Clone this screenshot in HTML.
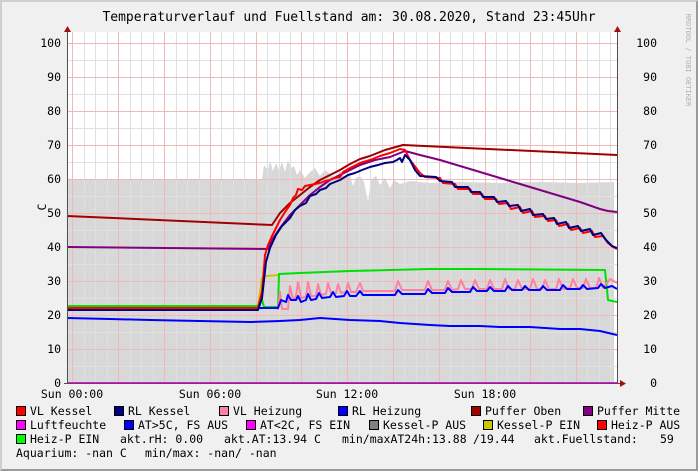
<!DOCTYPE html>
<html><head><meta charset="utf-8"><style>
html,body{margin:0;padding:0;}
body{width:698px;height:471px;overflow:hidden;background:#f0f0f0;position:relative;font-family:"DejaVu Sans Mono","Liberation Mono",monospace;}
.frame{position:absolute;left:0;top:0;width:694px;height:467px;border:2px solid #cfcfcf;border-right-color:#9a9a9a;border-bottom-color:#9a9a9a;}
.t{position:absolute;font-size:11.5px;color:#000;white-space:pre;line-height:12px;}
.b{position:absolute;width:8px;height:8px;border:1px solid #000;}
</style></head><body>
<div class="frame"></div>
<svg width="698" height="471" style="position:absolute;left:0;top:0" xmlns="http://www.w3.org/2000/svg" font-family="DejaVu Sans Mono, Liberation Mono, monospace">
<rect x="67" y="32" width="550" height="351" fill="#fff"/>
<!-- gray area -->
<path d="M67,383 L67,179 L262,179 L264,165 L268,170 L270,161 L273,171 L276,163 L279,170 L282,162 L285,172 L288,160 L291,168 L294,166 L297,175 L300,170 L305,178 L310,172 L315,168 L320,176 L325,170 L330,174 L335,178 L340,171 L345,178 L350,175 L353,186 L356,178 L360,176 L364,182 L368,202 L371,180 L376,176 L380,185 L385,178 L390,188 L394,180 L400,184 L410,181 L430,183 L460,182 L500,183 L540,182 L580,183 L614,182 L614,383 Z" fill="#d8d8d8"/>
<g stroke="#e0e0e0" stroke-width="1" fill="none">
<path d="M67,366.5H617M67,332.5H617M67,298.5H617M67,264.5H617M67,230.5H617M67,196.5H617M67,162.5H617M67,128.5H617M67,94.5H617M67,60.5H617"/>
<path d="M84.5,32V383M95.5,32V383M107.5,32V383M130.5,32V383M141.5,32V383M153.5,32V383M176.5,32V383M187.5,32V383M199.5,32V383M221.5,32V383M233.5,32V383M244.5,32V383M267.5,32V383M279.5,32V383M290.5,32V383M313.5,32V383M324.5,32V383M336.5,32V383M359.5,32V383M370.5,32V383M382.5,32V383M404.5,32V383M416.5,32V383M427.5,32V383M450.5,32V383M462.5,32V383M473.5,32V383M496.5,32V383M507.5,32V383M519.5,32V383M542.5,32V383M553.5,32V383M565.5,32V383M587.5,32V383M599.5,32V383M610.5,32V383"/>
</g>
<g stroke="#f2b8b8" stroke-width="1" fill="none">
<path d="M67,349.5H617M67,315.5H617M67,281.5H617M67,247.5H617M67,213.5H617M67,179.5H617M67,145.5H617M67,111.5H617M67,77.5H617M67,43.5H617"/>
<path d="M72.5,32V383M118.5,32V383M164.5,32V383M210.5,32V383M256.5,32V383M301.5,32V383M347.5,32V383M393.5,32V383M439.5,32V383M485.5,32V383M530.5,32V383M576.5,32V383"/>
</g>
<g fill="none" stroke-width="2" stroke-linejoin="round">
<path stroke="#0000ff" d="M67,318 L110,319 L150,320 L200,321 L250,322 L280,321 L300,320 L320,318 L350,320 L380,321 L400,323 L430,325 L450,326 L480,326 L500,327 L530,327 L560,329 L580,329 L600,331 L617,335"/>
<path stroke="#a00000" d="M67,216 L272,225 L280,213 L290,203 L300,195 L310,187 L320,180 L330,175 L340,170 L350,164 L360,159 L370,156 L385,150 L403,145 L617,155"/>
<path stroke="#800080" d="M67,247 L268,249 L272,240 L280,228 L290,215 L300,205 L310,195 L320,187 L330,180 L340,175 L350,170 L360,165 L375,160 L390,157 L405,151 L420,155 L440,160 L460,166 L480,172 L500,178 L520,184 L540,190 L560,196 L580,202 L600,209 L608,211 L617,212"/>
<path stroke="#c8c800" d="M67,307 L258,307 L262,278 L266,276 L280,275"/>
<path stroke="#00e000" d="M67,306 L258,306 L261,296 L264,307 L278,307 L279,274 L300,273 L350,271 L430,269 L480,269 L605,270 L608,300 L617,302"/>
<path stroke="#ff80a0" d="M278,310 L280,292 L282,309 L288,309 L290,286 L293,300 L296,296 L298,282 L301,298 L306,297 L308,282 L311,296 L316,296 L318,284 L321,295 L326,294 L328,283 L331,293 L336,293 L338,284 L341,293 L346,292 L348,283 L351,292 L356,292 L360,283 L363,291 L395,291 L398,281 L402,290 L425,290 L428,281 L432,290 L445,290 L448,281 L452,290 L458,289 L461,280 L465,289 L472,289 L475,280 L479,289 L487,289 L490,280 L494,289 L502,289 L505,279 L509,289 L515,289 L518,280 L522,289 L530,289 L533,279 L537,289 L542,289 L545,280 L549,289 L556,289 L559,279 L563,289 L570,288 L573,279 L577,288 L583,288 L586,279 L590,288 L596,288 L599,278 L603,288 L610,279 L617,283"/>
<path stroke="#0000ff" d="M258,308 L278,308 L281,300 L286,302 L288,295 L291,300 L296,300 L298,296 L301,302 L306,300 L308,294 L311,300 L316,299 L319,293 L322,298 L330,297 L333,292 L336,297 L344,296 L347,291 L350,296 L356,296 L360,291 L363,295 L395,295 L398,290 L402,294 L425,294 L428,289 L432,293 L445,293 L448,288 L452,292 L470,292 L473,287 L477,291 L487,291 L490,287 L494,291 L505,291 L508,286 L512,290 L522,290 L525,286 L529,290 L540,290 L543,286 L547,290 L560,290 L563,285 L567,289 L580,289 L583,285 L587,289 L598,288 L601,284 L605,288 L612,286 L617,289"/>
<path stroke="#ff0000" d="M67,308 L258,308 L262,292 L265,255 L268,245 L272,236 L276,228 L280,220 L285,212 L290,205 L293,198 L296,195 L298,189 L302,190 L305,186 L310,185 L315,184 L320,183 L325,181 L330,180 L335,178 L340,177 L343,172 L350,168 L360,163 L370,160 L380,156 L390,153 L400,149 L405,150 L410,160 L420,173 L425,177 L440,178 L443,183 L455,184 L458,189 L470,189 L473,194 L482,194 L485,199 L496,199 L499,204 L508,203 L511,209 L520,207 L523,213 L532,211 L535,217 L545,216 L548,221 L556,220 L559,226 L568,224 L571,230 L580,228 L583,233 L592,231 L595,237 L603,236 L608,243 L613,247 L617,249"/>
<path stroke="#000080" d="M67,310 L258,310 L262,298 L266,262 L270,248 L276,235 L282,226 L290,218 L295,210 L300,206 L306,203 L310,196 L316,194 L320,190 L326,188 L330,184 L340,180 L348,175 L355,173 L362,170 L370,167 L378,165 L385,163 L393,162 L397,160 L400,158 L402,162 L405,155 L410,160 L415,170 L420,176 L436,177 L440,181 L452,182 L455,187 L468,187 L471,192 L480,192 L483,197 L494,197 L497,202 L506,201 L509,206 L518,205 L521,211 L530,209 L533,215 L543,214 L546,219 L554,218 L557,224 L566,222 L569,228 L578,226 L581,231 L590,229 L593,235 L601,233 L606,240 L612,246 L617,248"/>
<path stroke="#ff00ff" d="M67,383 L617,383"/>
</g>
<!-- axes -->
<path d="M67.5,32V384M617.5,32V384M64,383.5H620" stroke="#505050" stroke-width="1"/>
<path d="M64,32 L71,32 L67.5,26 Z M614,32 L621,32 L617.5,26 Z M620,380 L620,387 L626,383.5 Z" fill="#a01010"/>
<g font-size="11.5" fill="#000" text-anchor="end">
<text x="61" y="47">100</text><text x="61" y="81">90</text><text x="61" y="115">80</text><text x="61" y="149">70</text><text x="61" y="183">60</text><text x="61" y="217">50</text><text x="61" y="251">40</text><text x="61" y="285">30</text><text x="61" y="319">20</text><text x="61" y="353">10</text><text x="61" y="387">0</text>
<text x="657" y="47">100</text><text x="657" y="81">90</text><text x="657" y="115">80</text><text x="657" y="149">70</text><text x="657" y="183">60</text><text x="657" y="217">50</text><text x="657" y="251">40</text><text x="657" y="285">30</text><text x="657" y="319">20</text><text x="657" y="353">10</text><text x="657" y="387">0</text>
</g>
<g font-size="11.5" fill="#000" text-anchor="middle">
<text x="72" y="398">Sun 00:00</text><text x="210" y="398">Sun 06:00</text><text x="347" y="398">Sun 12:00</text><text x="485" y="398">Sun 18:00</text>
<text x="349" y="21" font-size="13">Temperaturverlauf und Fuellstand am: 30.08.2020, Stand 23:45Uhr</text>
<text transform="translate(46,207) rotate(-90)" font-size="11.5">C</text>
<text transform="translate(686,60) rotate(90)" font-size="7" fill="#b0b0b0">RRDTOOL / TOBI OETIKER</text>
</g>
</svg>
<!-- legend -->
<div class="b" style="left:16px;top:406px;background:#ff0000"></div><div class="t" style="left:30px;top:405px">VL Kessel</div>
<div class="b" style="left:114px;top:406px;background:#000080"></div><div class="t" style="left:128px;top:405px">RL Kessel</div>
<div class="b" style="left:219px;top:406px;background:#ff80a0"></div><div class="t" style="left:233px;top:405px">VL Heizung</div>
<div class="b" style="left:338px;top:406px;background:#0000ff"></div><div class="t" style="left:352px;top:405px">RL Heizung</div>
<div class="b" style="left:471px;top:406px;background:#a00000"></div><div class="t" style="left:485px;top:405px">Puffer Oben</div>
<div class="b" style="left:583px;top:406px;background:#800080"></div><div class="t" style="left:597px;top:405px">Puffer Mitte</div>

<div class="b" style="left:16px;top:420px;background:#ff00ff"></div><div class="t" style="left:30px;top:419px">Luftfeuchte</div>
<div class="b" style="left:124px;top:420px;background:#0000ff"></div><div class="t" style="left:138px;top:419px">AT&gt;5C, FS AUS</div>
<div class="b" style="left:246px;top:420px;background:#ff00ff"></div><div class="t" style="left:260px;top:419px">AT&lt;2C, FS EIN</div>
<div class="b" style="left:369px;top:420px;background:#808080"></div><div class="t" style="left:383px;top:419px">Kessel-P AUS</div>
<div class="b" style="left:483px;top:420px;background:#c8c800"></div><div class="t" style="left:497px;top:419px">Kessel-P EIN</div>
<div class="b" style="left:597px;top:420px;background:#ff0000"></div><div class="t" style="left:611px;top:419px">Heiz-P AUS</div>

<div class="b" style="left:16px;top:434px;background:#00ff00"></div><div class="t" style="left:30px;top:433px">Heiz-P EIN</div>
<div class="t" style="left:120px;top:433px">akt.rH: 0.00</div>
<div class="t" style="left:224px;top:433px">akt.AT:13.94 C</div>
<div class="t" style="left:342px;top:433px">min/maxAT24h:13.88</div>
<div class="t" style="left:473px;top:433px">/19.44</div>
<div class="t" style="left:534px;top:433px">akt.Fuellstand:</div>
<div class="t" style="left:660px;top:433px">59</div>
<div class="t" style="left:16px;top:447px">Aquarium: -nan C</div>
<div class="t" style="left:145px;top:447px">min/max: -nan/ -nan</div>
</body></html>
